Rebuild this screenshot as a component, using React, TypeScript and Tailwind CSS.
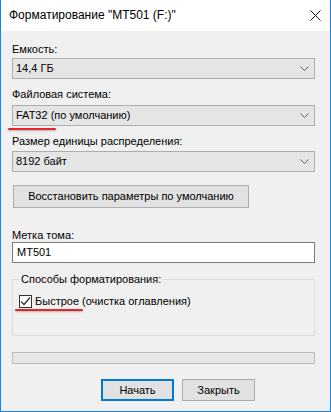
import React from "react";

function Chevron() {
  return (
    <svg width="9" height="5" viewBox="0 0 9 5" fill="none" stroke="#606060" strokeWidth="1">
      <polyline points="0.5 0.5 4.5 4.5 8.5 0.5" />
    </svg>
  );
}

function Select({ value }: { value: string }) {
  return (
    <div className="flex h-[21px] w-[303px] items-center justify-between border border-[#adadad] bg-[#e5e5e5] pl-[3px] pr-[5px]">
      <span className="leading-[15px]">{value}</span>
      <Chevron />
    </div>
  );
}

export default function App() {
  return (
    <div className="relative flex h-[412px] w-[331px] flex-col border-x border-b border-[#1883d7] bg-white font-['Liberation_Sans',Arial,sans-serif] text-[11px] text-black">
      {/* title bar */}
      <div className="flex h-[31px] shrink-0 items-center justify-between pl-[8px] pr-[9px]">
        <span className="text-[12px] leading-[15px]">Форматирование "MT501 (F:)"</span>
        <svg width="11" height="11" viewBox="0 0 11 11" stroke="#111" strokeWidth="1">
          <path d="M0.5 0.5 L10.5 10.5 M10.5 0.5 L0.5 10.5" />
        </svg>
      </div>

      {/* body */}
      <div className="flex flex-1 flex-col bg-[#f0f0f0] pl-[11px] pt-[11px]">
        <div className="leading-[15px]">Емкость:</div>
        <div className="mt-[1px]">
          <Select value="14,4 ГБ" />
        </div>

        <div className="mt-[8px] leading-[15px]">Файловая система:</div>
        <div className="mt-[3px]">
          <Select value="FAT32 (по умолчанию)" />
        </div>

        <div className="mt-[8px] leading-[15px]">Размер единицы распределения:</div>
        <div className="mt-[2px]">
          <Select value="8192 байт" />
        </div>

        <button className="ml-[1px] mt-[13px] h-[23px] w-[236px] border border-[#adadad] bg-[#e1e1e1] leading-[15px]">
          Восстановить параметры по умолчанию
        </button>

        <div className="mt-[20px] leading-[14px]">Метка тома:</div>
        <div className="flex h-[21px] w-[303px] items-center border border-[#7a7a7a] bg-white pl-[4px] leading-[15px]">
          MT501
        </div>

        <fieldset className="mt-[9px] h-[64px] w-[303px] border border-[#dcdcdc] pl-[6px]">
          <legend className="px-[2px] leading-[15px]">Способы форматирования:</legend>
          <label className="mt-[7px] flex items-center gap-[3px]">
            <span className="flex h-[13px] w-[13px] items-center justify-center border border-[#333] bg-white">
              <svg width="11" height="11" viewBox="0 0 11 11" fill="none" stroke="#333" strokeWidth="1.2">
                <polyline points="1 5.5 4 8.5 10 1.5" />
              </svg>
            </span>
            <span className="leading-[15px]">Быстрое (очистка оглавления)</span>
          </label>
        </fieldset>

        <div className="mt-[16px] h-[12px] w-[303px] border border-[#bcbcbc] bg-[#e6e6e6]" />

        <div className="ml-[89px] mt-[15px] flex gap-[8px]">
          <button className="h-[22px] w-[73px] border-2 border-[#0078d7] bg-[#e1e1e1] leading-[15px]">
            Начать
          </button>
          <button className="h-[22px] w-[73px] border border-[#adadad] bg-[#e1e1e1] leading-[15px]">
            Закрыть
          </button>
        </div>
      </div>

      {/* red annotation marks */}
      <div className="absolute left-[7px] top-[128px] h-[2px] w-[48px] rounded-full bg-[#e3262b] shadow-[0_1px_2px_rgba(0,0,0,0.25)]" />
      <div className="absolute left-[14px] top-[309px] h-[2px] w-[68px] rounded-full bg-[#e3262b] shadow-[0_1px_2px_rgba(0,0,0,0.25)]" />
    </div>
  );
}
